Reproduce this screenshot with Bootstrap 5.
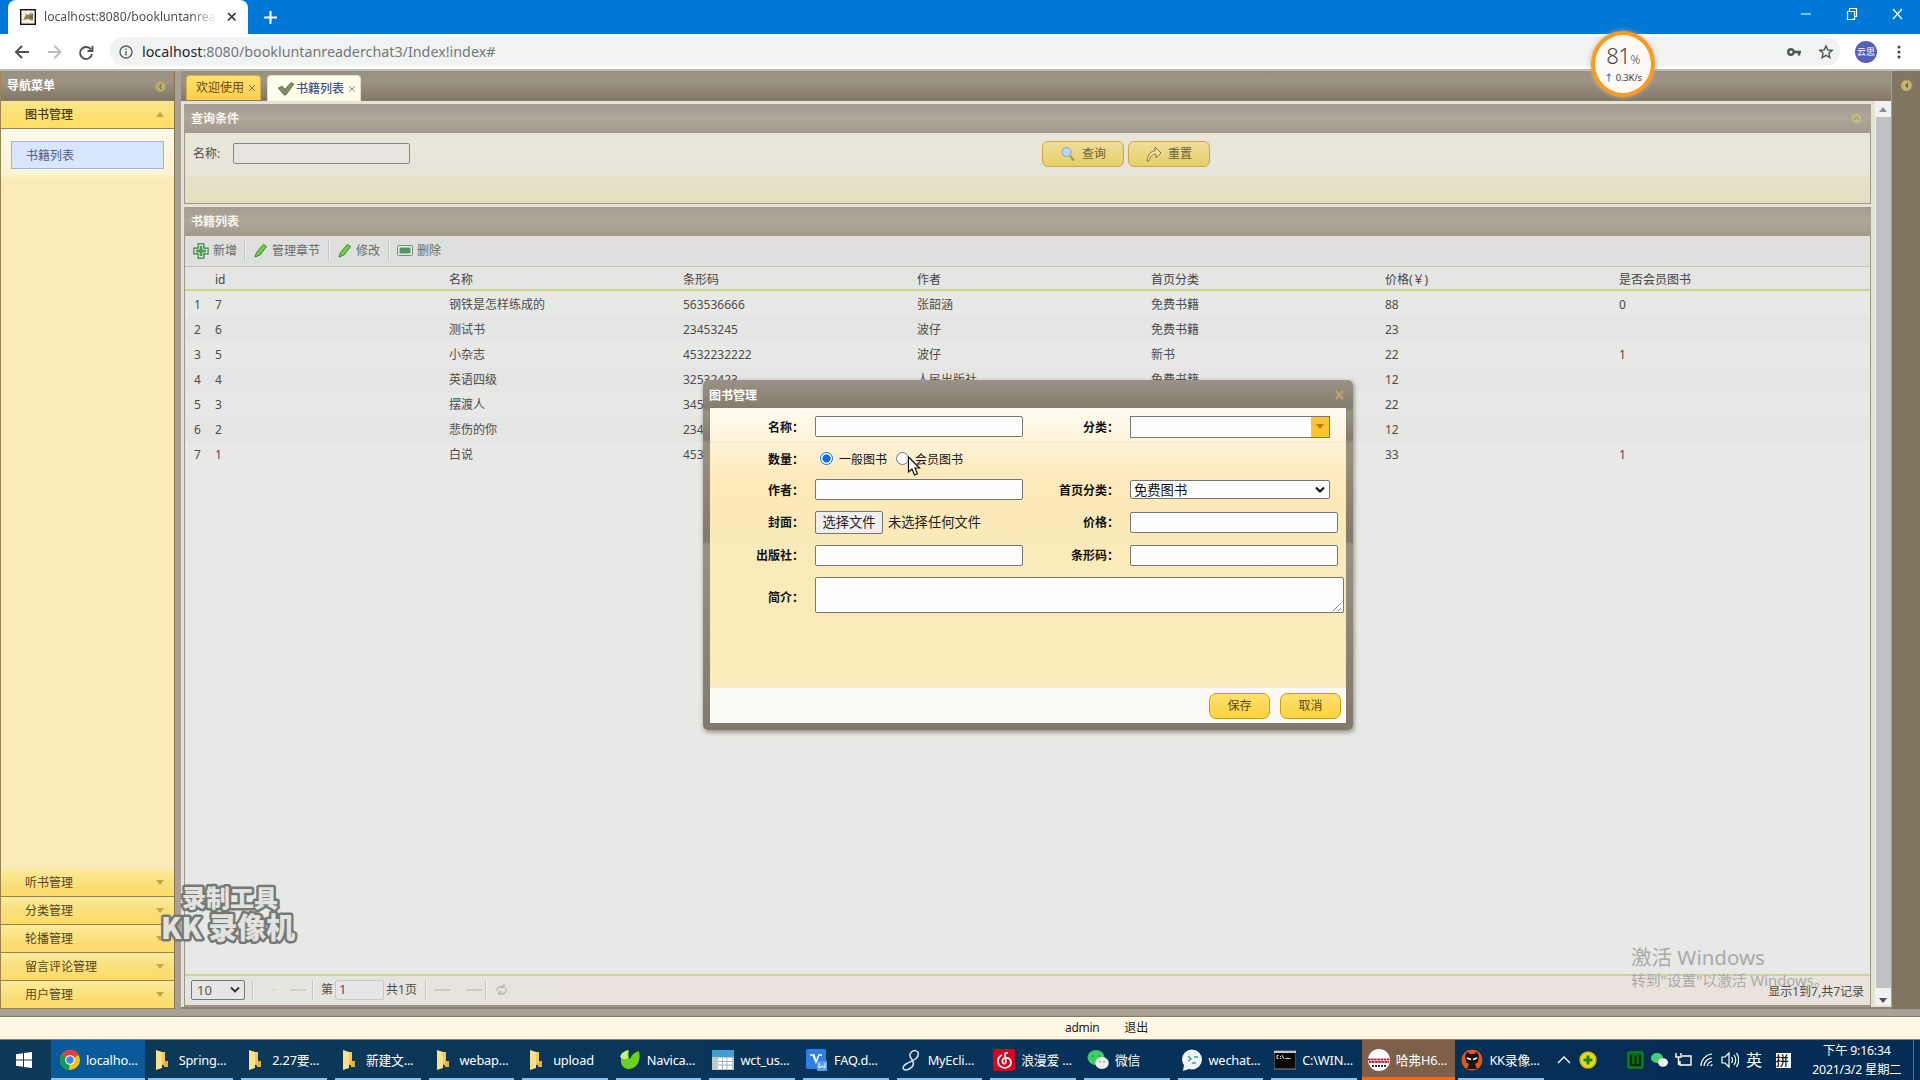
<!DOCTYPE html>
<html lang="zh-CN">
<head>
<meta charset="utf-8">
<title>书籍列表</title>
<link href="https://cdn.jsdelivr.net/npm/bootstrap@5.3.0/dist/css/bootstrap.min.css" rel="stylesheet">
<style>
*{box-sizing:border-box}
body{width:1920px;height:1080px;overflow:hidden;margin:0;font:12px/16px "Noto Sans","Noto Sans CJK SC",sans-serif;color:#4c4c4a;background:#fff;position:relative}
svg{display:block;flex:none}
.tabstrip{height:34px;background:#0078d7;padding-left:8px}
.btab{width:240px;height:34px;background:#fff;border-radius:8px 8px 0 0;padding:0 11px 0 12px;color:#4b4f54;font-size:12.2px}
.btab .ttl{width:173px;margin-left:8px;overflow:hidden;white-space:nowrap;-webkit-mask-image:linear-gradient(90deg,#000 85%,transparent)}
.addr{height:37px;border-bottom:2px solid #b9bbb6;background:#fff;padding-left:13px}
.omni{width:1730px;height:29px;background:#f1f3f2;border-radius:14px;padding-left:9px;font-size:14.3px;color:#73777b;margin-left:13px}
.omni b{font-weight:400;color:#25282b}
.avatar{width:22px;height:22px;border-radius:50%;background:#5560b8;color:#fff;font-size:9px;line-height:22px;text-align:center;margin-left:15px}
.workarea{height:938px;background:#a8a198}
.west{width:175px;border-right:1px solid #8c7449;border-left:1px solid #9c8454;background:#faebba}
.darkhead{height:30px;flex:none;background:linear-gradient(#99907f,#9c9484 35%,#827967 90%);color:#fff;font-weight:700;padding:0 7px 0 6px}
.acc{height:28px;flex:none;padding:0 10px 0 24px;border-bottom:1px solid #9a824e;background:linear-gradient(#fdeb9c,#fae07c 50%,#fbdc66);color:#54461f}
.acc.first{background:linear-gradient(#fbe58c,#fbe174 50%,#ffdf62);font-weight:500;color:#4a3a12}
.tri{width:0;height:0;border:4px solid transparent;border-bottom:0;border-top:5px solid #c9a63c}
.tri.up{border-top:0;border-bottom:5px solid #c9a63c}
.accbody{height:740px;flex:none;background:linear-gradient(#fffaea,#fdf3d2 45px,#fbebba 50px,#fbebba);padding:12px 10px}
.leaf{height:28px;border:1px solid #9db4e0;background:#d9e5fa;padding-left:14px;line-height:27px;color:#4f5f8c}
.centre{width:1710px;margin-left:6px;background:#e5e3d3;border-bottom:2px solid #8c8474}
.ctabs{height:30px;background:linear-gradient(#99907f,#9c9484 35%,#827967 95%);padding:4px 0 0 5px;gap:6px}
.ptab{height:25px;border:1px solid #dcb14a;border-bottom:0;border-radius:4px 4px 0 0;background:linear-gradient(#ffe070,#fbcf4a);color:#6b4a0c;padding:0 4px 0 9px}
.ptab.on{height:26px;background:#fffcec;border-color:#e9dfc0;color:#3d5a8c;font-weight:500}
.scrollarea{height:906px}
.stack{width:1687px;margin:3px 0 0 3px}
.phead{height:29px;background:linear-gradient(#a59d94,#aea698 50%,#a19a8e);color:#f7f5ee;font-weight:700;padding:0 8px 0 7px}
.pbox{border:1px solid #9b9687;border-top:0}
.qbody{height:71px;background:linear-gradient(#e9e6d9,#e9e4da 42px,#e4e1c6 44px,#e2dfc3);padding:10px 0 0 8px}
.qin{width:177px;height:21px;border:1px solid #858585;background:#e7e4e2;border-radius:2px}
.ybtn{height:26px;width:82px;border:1px solid #cfa24a;border-radius:6px;background:linear-gradient(#f0dd9a,#e5d066);color:#6b6240;gap:6px;display:flex;align-items:center;justify-content:center;padding:0}
.tool{height:30px;background:#dee0dd;border-top:3px solid #e5dfd6;padding:0 0 4px 8px;color:#666b66}
.tool span{margin-left:4px}
.tsep{width:2px;height:20px;border-left:1px solid #c4c6c3;border-right:1px solid #f2f3f1}
.grow{height:25px;padding-left:26px}
.grow.hd{height:25px;border-top:1px solid #bfc1bd;background:#e7e7e0;border-bottom:2px solid #cbd67e;color:#444;margin-bottom:1px;padding-top:3px}
.grow:nth-child(odd){background-color:#e5e6e3}
.gcell{width:234px;padding-left:4px;white-space:nowrap}
.gnum{width:26px;margin-left:-26px;padding-left:9px}
.grid{height:708px;background:#e8e9e6}
.pager{height:32px;border-top:2px solid #cdd889;background:linear-gradient(90deg,#e4e5df,#e9e3dc 25%);padding:0 6px 2px;border-bottom:1px solid #9b9687}
.psel{width:54px;height:20px;border:1px solid #777;border-radius:2px;background:#e5e7e6;color:#555;padding:0 4px 0 5px;font-size:13px}
.vscroll{width:16px;margin-left:4px;background:#f1f1f1;height:904px}
.thumb{height:871px;background:#c1c1c6;margin-left:1px}
.sbtn{height:16px}
.east{width:28px;background:#80765f;margin-left:1px;padding-top:8px}
.south{height:31px;background:#fff8e2;border-top:7px solid #a8a198;border-bottom:1px solid #8f8157;font-size:12px;color:#222;padding-left:1065px;gap:25px;box-shadow:inset 0 1px #857b69}
.south span:first-child{letter-spacing:-.3px}
.taskbar{height:40px;background:linear-gradient(90deg,#0d3a58,#06325a 60%,#052b52);color:#fff;font-size:12.8px;letter-spacing:-.2px;white-space:nowrap}
.tk{width:93.64px;height:40px;padding-left:6px;position:relative;flex:none}
.tk::after{content:"";position:absolute;left:3px;right:5px;bottom:0;height:2px;background:#8cc3ec}
.tk.cur{background:#0a5a9a;padding-left:8px}.tk.cur::after{left:0;right:0}
.tk.hot{background:#7e5f4a}.tk.hot::after{left:0;right:0;background:#ff6a00;height:3px}
.tk span{margin-left:6px}
.tk.cur span{margin-left:5px}
.dlg{position:absolute;left:703px;top:380px;width:650px;height:350px;background:linear-gradient(#999287,#857d6c 8%,#99917f 9%,#847b6b 17%,#99917f 18%,#82796b 46%,#989082 47%,#82796b);border-radius:5px;padding:0 7px 7px;box-shadow:1px 2px 5px rgba(60,60,50,.55)}
.dhead{height:28px;color:#fff;font-weight:700;margin:0 -3px 0 -1px;padding:3px 0 0 0}
.dbody{height:279px;background:linear-gradient(#fffbef,#fef3d8 36px,#fdebc0 60px,#fbe9b8 90px,#faebbd)}
.frow{color:#111}
.flab{width:94px;margin-right:11px;text-align:right;font:700 12px/16px "Noto Sans CJK SC",sans-serif;color:#111;white-space:nowrap}
.flab.two{width:96px}
.fin{width:208px;height:21px;border:1px solid #767676;border-radius:2px;background:#fdfefb;display:flex;align-items:center}
.dfoot{height:36px;background:#fafaf6;border-top:1px solid #f8e7d4;padding-right:5px;gap:10px}
.dfoot .ybtn{width:61px;border-color:#d09c14;background:linear-gradient(#ffe070,#fbd23f);color:#5b4a16;border-radius:7px}
.rad{width:13px;height:13px;border:1px solid #767676;border-radius:50%;background:#fff}
.rad.sel{border:1px solid #0b6fe8;background:radial-gradient(#0b6fe8 0 3.8px,#fff 4.4px)}
.over{position:absolute}
.gauge{left:1591px;top:31px;width:64px;height:66px;border:4px solid #fb9a1c;border-radius:50%;background:#fdfaf5;box-shadow:0 0 5px #b9b0a0;text-align:center;color:#444}
.watermark{left:1631px;top:944px;color:#a9aaa8;white-space:nowrap}
</style>
<script src="https://cdn.jsdelivr.net/npm/bootstrap@5.3.0/dist/js/bootstrap.bundle.min.js"></script>
</head>
<body>
<header>
 <div class="tabstrip d-flex align-items-center">
  <div class="btab d-flex align-items-center">
   <svg width="16" height="16"><rect x=".7" y=".7" width="14.6" height="14.6" fill="#f4f2e4" stroke="#111" stroke-width="1.4"/><path d="M3 11l3-5-2-2 4 2 4-3-2 5 3 4-5-2z" fill="#8c8343"/><path d="M9 8l4-4v7z" fill="#5b6b60"/></svg>
   <span class="ttl">localhost:8080/bookluntanrea</span>
   <svg class="ms-auto" width="10" height="10" stroke="#333" stroke-width="1.7"><path d="M1 1l7.500 7.500M8.500 1L1 8.500"/></svg>
  </div>
  <svg class="ms-3" width="13" height="13" stroke="#fff" stroke-width="2"><path d="M6.500 0v13M0 6.500h13"/></svg>
  <div class="ms-auto d-flex align-items-center me-3" style="margin-bottom:6px">
   <svg width="104" height="14" fill="none" stroke="#fff" stroke-width="1.2"><path d="M1 7h10M47.500 4.500h7v8h-7zM49.500 4.500v-3h7v8h-2M93 2l9 10M102 2l-9 10"/></svg>
  </div>
 </div>
 <div class="addr d-flex align-items-center">
  <svg width="84" height="18" fill="none" stroke-width="1.9"><path d="M16 9H3.500M9 3L3 9l6 6" stroke="#4d5054"/><path d="M35 9h12.500M41.500 3l6 6-6 6" stroke="#b9bbbd"/><path d="M78 6.500A6 6 0 1 0 79 11M79.500 3v5H74.500" stroke="#4d5054"/></svg>
  <div class="omni d-flex align-items-center">
   <svg width="14" height="14" fill="none" stroke="#5b5f63" stroke-width="1.4"><circle cx="7" cy="7" r="6"/><path d="M7 6v4.500M7 3.500V5"/></svg>
   <span style="margin-left:9px"><b>localhost</b>:8080/bookluntanreaderchat3/Index!index#</span>
   <svg class="ms-auto" width="60" height="18" fill="none" stroke="#505357" stroke-width="2.400"><circle cx="11" cy="9" r="2.800"/><path d="M14 9h7M19 9v3.500"/><path stroke-width="1.400" d="M46 3l1.800 4 4.400.4-3.300 2.900 1 4.300L46 12.300l-3.900 2.300 1-4.300-3.300-2.900 4.400-.4z"/></svg>
  </div>
  <div class="avatar">云思</div>
  <svg style="margin-left:20px" width="4" height="16" fill="#444"><circle cx="2" cy="3" r="1.500"/><circle cx="2" cy="8" r="1.500"/><circle cx="2" cy="13" r="1.500"/></svg>
 </div>
</header>

<main class="workarea d-flex">
 <aside class="west d-flex flex-column">
  <div class="darkhead d-flex align-items-center justify-content-between"><span>导航菜单</span><svg width="13" height="13"><circle cx="6.500" cy="6.500" r="5.500" fill="#b9ab72" stroke="#a4955c"/><path d="M8 3.500L5 6.500l3 3M6.500 4v5" stroke="#857647" fill="none"/></svg></div>
  <div class="acc first d-flex align-items-center justify-content-between">图书管理<i class="tri up"></i></div>
  <div class="accbody"><div class="leaf">书籍列表</div></div>
  <div class="acc d-flex align-items-center justify-content-between">听书管理<i class="tri"></i></div>
  <div class="acc d-flex align-items-center justify-content-between">分类管理<i class="tri"></i></div>
  <div class="acc d-flex align-items-center justify-content-between">轮播管理<i class="tri"></i></div>
  <div class="acc d-flex align-items-center justify-content-between">留言评论管理<i class="tri"></i></div>
  <div class="acc d-flex align-items-center justify-content-between">用户管理<i class="tri"></i></div>
 </aside>

 <section class="centre">
  <div class="ctabs d-flex">
   <div class="ptab d-flex align-items-center">欢迎使用<svg class="ms-1" width="8" height="8" stroke="#6d6f7e"><path d="M1 1l6 6M7 1L1 7"/></svg></div>
   <div class="ptab on d-flex align-items-center"><svg width="18" height="14" style="margin-right:1px"><path d="M1 6l4-2 3 3 6-6.500 3 1.500-8 11H7z" fill="#7d9063" stroke="#5c6c50" stroke-width=".7"/></svg>书籍列表<svg class="ms-1" width="8" height="8" stroke="#888"><path d="M1 1l6 6M7 1L1 7"/></svg></div>
  </div>
  <div class="scrollarea d-flex">
   <div class="stack">
    <div class="phead d-flex align-items-center justify-content-between"><span>查询条件</span><svg width="13" height="13"><circle cx="6.500" cy="6.500" r="5.500" fill="#bfb792" stroke="#b0a67c"/><path d="M4 8l2.500-3L9 8" stroke="#9b9064" fill="none"/></svg></div>
    <div class="pbox qbody d-flex align-items-start">
     <span style="width:40px;margin-top:3px">名称:</span><div class="qin"></div>
     <div class="d-flex" style="margin-left:632px;gap:4px;margin-top:-2px">
      <button class="ybtn"><svg width="16" height="16"><circle cx="6.500" cy="6" r="4.500" fill="#bcd7f5" stroke="#7e9fd0"/><path d="M10 10l4 4.500" stroke="#b98c50" stroke-width="2"/></svg>查询</button>
      <button class="ybtn"><svg width="16" height="18"><path d="M1 16C2 9 5 6 9 6V2l6 6-5 5V9C6 9 4 12 3 16z" fill="#f0e2a8" stroke="#8c7440"/></svg>重置</button>
     </div>
    </div>
    <div style="height:3px"></div>
    <div class="phead d-flex align-items-center">书籍列表</div>
    <div class="pbox">
     <div class="tool d-flex align-items-center">
      <svg width="16" height="16" viewBox="0 0 17 17"><path d="M5.500 1h6v4.500H16v6h-4.500V16h-6v-4.500H1v-6h4.500z" fill="#fff" stroke="#3f7548" stroke-width="1.300"/><path d="M7 3h3v4h4v3h-4v4H7v-4H3V7h4z" fill="#3fa647"/></svg><span>新增</span>
      <i class="tsep" style="margin:0 8px 0 7px"></i>
      <svg width="14" height="15"><path d="M1 14l1.500-4.500L9.500 1.500l3 2L6 12z" fill="#6ed04a" stroke="#3a8137"/></svg><span>管理章节</span>
      <i class="tsep" style="margin:0 8px"></i>
      <svg width="14" height="15"><path d="M1 14l1.500-4.500L9.500 1.500l3 2L6 12z" fill="#6ed04a" stroke="#3a8137"/></svg><span>修改</span>
      <i class="tsep" style="margin:0 7px 0 8px"></i>
      <svg width="16" height="11"><rect x=".6" y=".6" width="14.800" height="9.800" rx="1" fill="#f2f6f0" stroke="#708072"/><rect x="2.500" y="2.500" width="11" height="6" fill="#4b9a60"/></svg><span>删除</span>
     </div>
     <div class="grid" id="bookGrid"></div>
     <div class="pager d-flex align-items-center">
      <div class="psel d-flex align-items-center justify-content-between">10<svg width="10" height="8" fill="none" stroke="#333" stroke-width="1.800"><path d="M1 1.500l4 4 4-4"/></svg></div>
      <i class="tsep" style="margin:0 10px 0 7px"></i><svg width="48" height="8" stroke="#d2d3bc"><path d="M9 4h2M26 4h16" stroke-width="2"/></svg>
      <i class="tsep" style="margin-right:7px"></i>第<div class="psel" style="width:49px;border-color:#c9c9c4;margin:0 2px;padding-left:3px;line-height:17px">1</div>共1页
      <i class="tsep" style="margin:0 5px 0 8px"></i><svg width="53" height="8" stroke="#cfcbbd" stroke-width="2"><path d="M2 4h16M34 4h16"/></svg><i class="tsep" style="margin-right:8px"></i>
      <svg width="13" height="13" fill="none" stroke="#c0b9ab" stroke-width="1.400"><path d="M2 8a4.500 4.500 0 0 1 7-4M11 5a4.500 4.500 0 0 1-7 5M9 1v3.500H5.500M4 12V9h3"/></svg>
      <span class="ms-auto" style="padding-top:5px">显示1到7,共7记录</span>
     </div>
    </div>
   </div>
   <div class="vscroll"><div class="sbtn d-flex align-items-center justify-content-center"><i class="tri up" style="border-bottom-color:#8f8f8f"></i></div><div class="thumb"></div><div class="sbtn d-flex align-items-center justify-content-center pt-2"><i class="tri" style="border-top-color:#505050"></i></div></div>
  </div>
 </section>
 <aside class="east"><svg class="mx-auto" width="13" height="13"><circle cx="6.500" cy="6.500" r="5.500" fill="#c4b577" stroke="#a4955c"/><path d="M8 3.500L5 6.500l3 3" fill="#6d6138"/></svg></aside>
</main>
<div class="south d-flex align-items-center"><span>admin</span><span>退出</span></div>

<footer class="taskbar d-flex align-items-center">
 <div style="width:51px;padding-left:16px"><svg width="16" height="16" fill="#fff"><path d="M0 2.300l7-1v6.200H0zM8 1.100L16 0v7.500H8zM0 8.500h7v6.200l-7-1zM8 8.500h8V16l-8-1.100z"/></svg></div>
 <div class="d-flex" id="tasks"></div>
 <svg style="margin-left:6px" width="184" height="26" fill="none" stroke="#fff" stroke-width="1.400">
  <path d="M3 16l6-6 6 6"/>
  <circle cx="33" cy="13" r="8" fill="#f3d813" stroke="#c9b80d"/><path d="M33 8.500v9M28.500 13h9" stroke="#128c2c" stroke-width="3"/>
  <rect x="73" y="5" width="15" height="16" rx="2" fill="#0b6b12" stroke="#0a8c17"/><path d="M76 8v10h9V8M80.500 9v8" stroke="#042f0a" stroke-width="2"/>
  <ellipse cx="102" cy="11" rx="6" ry="5" fill="#48cf71" stroke="none"/><ellipse cx="108" cy="15.500" rx="5" ry="4.200" fill="#eef5ef" stroke="none"/>
  <path d="M127 9h9v9h-11v-4M121 6v4h5V6M123.500 10v8"/>
  <path d="M146 19a12 12 0 0 1 11-12M149 19a8.500 8.500 0 0 1 8-8M152.500 19a5 5 0 0 1 4.500-4.500M155.500 19l2-1.500" stroke-width="1.200"/>
  <path d="M167 10h3l4-4v14l-4-4h-3zM176.500 10q2 3 0 6M179 8q3.500 5 0 10M181.500 6q4.500 7 0 14" stroke-width="1.200"/>
 </svg>
 <span style="font-size:16px;margin-left:7px">英</span>
 <span style="margin-left:14px;background:#fff;color:#111;width:15px;height:15px;line-height:15px;font-size:13px;font-weight:500">拼</span>
 <div class="text-center" style="width:100px;margin-left:16px;line-height:19px;font-size:12.3px">下午 9:16:34<br>2021/3/2 星期二</div>
 <i style="width:1px;height:40px;background:#557796;margin-left:6px"></i>
</footer>

<div class="over watermark"><div style="font-size:20.500px;line-height:26px">激活 Windows</div><div style="font-size:14.800px;line-height:20px">转到"设置"以激活 Windows。</div></div>

<svg class="over" style="left:155px;top:880px" width="150" height="70" font-family="Noto Sans CJK SC,sans-serif" font-weight="900" fill="#e2e3df" stroke="#747977" stroke-width="5" stroke-linejoin="round" paint-order="stroke">
 <text x="27" y="27" font-size="24">录制工具</text>
 <text x="6" y="59" font-size="29" textLength="134" lengthAdjust="spacingAndGlyphs">KK 录像机</text>
</svg>

<section class="dlg">
 <div class="dhead d-flex align-items-center justify-content-between"><span>图书管理</span><svg width="15" height="14" stroke="#b4a767" stroke-width="2.600"><path d="M2 2l7 8M9 2l-7 8"/></svg></div>
 <div class="dbody">
  <div class="frow d-flex align-items-center" style="height:35px;padding-top:3px;border-bottom:1px dotted #eadfc2"><div class="flab">名称：</div><div class="fin"></div><div class="flab two">分类：</div><div class="fin justify-content-end" style="width:200px;height:22px;border-radius:0"><div class="d-flex align-items-center justify-content-center h-100" style="width:18px;background:#fcc62e"><i class="tri" style="border-top-color:#b07c0c"></i></div></div></div>
  <div class="frow d-flex align-items-center" style="height:31px"><div class="flab">数量：</div><i class="rad sel" style="margin:0 6px 0 5px"></i><span style="padding-top:3px">一般图书</span><i class="rad" style="margin:0 6px 0 9px"></i><span style="padding-top:3px">会员图书</span></div>
  <div class="frow d-flex align-items-center" style="height:31px"><div class="flab">作者：</div><div class="fin"></div><div class="flab two">首页分类：</div><div class="fin justify-content-between" style="width:200px;height:19px;font-size:13.300px;padding:0 4px 0 3px">免费图书<svg width="10" height="8" fill="none" stroke="#111" stroke-width="2"><path d="M1 1.500l4 4 4-4"/></svg></div></div>
  <div class="frow d-flex align-items-center" style="height:34px"><div class="flab">封面：</div><div class="d-flex align-items-center" style="width:208px;font-size:13.300px;color:#222"><span class="fin justify-content-center" style="width:68px;height:23px;background:#efefef;margin-right:5px">选择文件</span>未选择任何文件</div><div class="flab two">价格：</div><div class="fin"></div></div>
  <div class="frow d-flex align-items-center" style="height:32px"><div class="flab">出版社：</div><div class="fin"></div><div class="flab two">条形码：</div><div class="fin"></div></div>
  <div class="frow d-flex align-items-center" style="height:48px"><div class="flab" style="padding-top:3px">简介：</div><div class="fin align-items-end justify-content-end" style="width:529px;height:36px"><svg width="11" height="11" stroke="#777" stroke-width=".9"><path d="M1 10l8-8M6 10l3-3"/></svg></div></div>
 </div>
 <div class="dfoot d-flex align-items-center justify-content-end"><button class="ybtn">保存</button><button class="ybtn">取消</button></div>
</section>
<svg class="over" style="left:907px;top:456px" width="15" height="21"><path d="M1.500 1v15l3.500-3 2.500 6 3-1.300L8 12h4.500z" fill="#fff" stroke="#111" stroke-width="1.200"/></svg>

<div class="over gauge"><div style="font-size:22px;line-height:24px;margin-top:8px;letter-spacing:-.5px;font-weight:300">81<small style="font-size:12px">%</small></div><div style="font-size:9.500px;line-height:12px;margin-top:0;letter-spacing:-.2px"><b style="color:#1587d8">↑</b> 0.3K/s</div></div>

<script>
const books=[
 ['id','名称','条形码','作者','首页分类','价格(￥)','是否会员图书'],
 ['7','钢铁是怎样练成的','563536666','张韶涵','免费书籍','88','0'],
 ['6','测试书','23453245','波仔','免费书籍','23',''],
 ['5','小杂志','4532232222','波仔','新书','22','1'],
 ['4','英语四级','32532423','人民出版社','免费书籍','12',''],
 ['3','摆渡人','345','','','22',''],
 ['2','悲伤的你','234','','','12',''],
 ['1','白说','453','','','33','1']];
document.getElementById('bookGrid').innerHTML=books.map((r,i)=>
 `<div class="grow d-flex align-items-center${i?'':' hd'}"><span class="gnum">${i||''}</span>${r.map(c=>`<span class="gcell">${c}</span>`).join('')}</div>`).join('');

const folder='<path d="M5 3h9v14l-4-2v4l-5-2z" fill="#f3c95a"/><path d="M5 1l6 2v16l-6 2z" fill="#ffe08a"/><path d="M13 12h4v6h-4z" fill="#e6b23e"/>';
const tasks=[
 ['localho...','<circle cx="11" cy="11" r="10" fill="#f1c40f"/><path d="M11 11L2.300 6A10 10 0 0 1 20 6z" fill="#db4437"/><path d="M11 11L2.300 6A10 10 0 0 0 10 21z" fill="#0f9d58"/><circle cx="11" cy="11" r="4.800" fill="#fff"/><circle cx="11" cy="11" r="3.700" fill="#4285f4"/>','cur'],
 ['Spring...',folder],['2.27要...',folder],['新建文...',folder],['webap...',folder],['upload',folder],
 ['Navica...','<path d="M2 12q-1-9 8-11-1 7 1 9 2-6 9-8 2 10-3 15-4 4-9 3-6-2-6-8z" fill="#6cd020"/><path d="M1 8q1-5 8-7-1 6 0 8-4 3-8-1z" fill="#c9f07a"/>'],
 ['wct_us...','<rect x="0" y="1" width="22" height="20" fill="#c2c6c8"/><rect width="22" height="7" y="1" fill="#3fa0cf"/><path d="M6 9h14v11H6z" fill="#fff"/><path d="M6 12.500h14M6 16h14M10.500 9v11M15 9v11" stroke="#9bb"/>'],
 ['FAQ.d...','<rect width="20" height="20" rx="2" fill="#2f80e4"/><path d="M4 6h4l2 7 3-7h3M7 6l3 7" stroke="#fff" fill="none" stroke-width="1.500"/><rect x="11" y="12" width="10" height="10" fill="#5b9bf0"/><path d="M13 14v5l3-2 3 2v-5" stroke="#fff" fill="none"/>'],
 ['MyEcli...','<path d="M18 3C13-1 8 5 11 9s4 8-2 11-8-2-3-5 14-5 12-12" fill="none" stroke="#dce6ee" stroke-width="1.500"/>'],
 ['浪漫爱 ...','<rect width="22" height="22" rx="2" fill="#d9001b"/><path d="M15 4q-4-1-3 3l1 6q-1 3-3 1-2-4 2-5 5-1 6 4 0 5-6 6-7-1-7-7 0-4 4-6" fill="none" stroke="#fff" stroke-width="1.700"/>'],
 ['微信','<ellipse cx="9" cy="8.500" rx="8.500" ry="7.500" fill="#3ccf63"/><ellipse cx="15" cy="14" rx="6.800" ry="6" fill="#eef2ef"/><path d="M6 6v2M12 6v2M13 12v1.500M17 12v1.500" stroke="#284"/>'],
 ['wechat...','<circle cx="11" cy="10.500" r="10" fill="#eef3f3"/><path d="M3 16l-1 6 6-2z" fill="#eef3f3"/><path d="M7 7l3 3-3 2M13 8h4M11 14h4" stroke="#3aa58d" fill="none" stroke-width="1.500"/>'],
 ['C:\\WIN...','<rect y="2" width="22" height="18" fill="#0a0a0a" stroke="#888"/><path d="M0 2h22v2H0z" fill="#c8c8c8"/><path d="M4.500 6.500h-1.500v3h1.500M6.500 7v1M6.500 9v1M8 6l2 4M11.500 9.500h5" stroke="#ddd" fill="none"/>'],
 ['哈弗H6...','<circle cx="11" cy="11" r="11" fill="#fff"/><path d="M0 10.500h22M1 13h20" stroke="#b3203a" stroke-width="1.800" stroke-dasharray="2.500 .6"/><path d="M4 17h14" stroke="#333" stroke-width="2" stroke-dasharray="2 1"/>','hot'],
 ['KK录像...','<circle cx="11" cy="11" r="10.500" fill="#e4580f"/><path d="M4 7l2-4 3 2h4l3-2 2 4-1 6-3 2 2 5H6l2-5-3-2z" fill="#141414"/><path d="M6 9l4 1.500M16 9l-4 1.500" stroke="#fff" stroke-width="1.500"/>']];
document.getElementById('tasks').innerHTML=tasks.map(([t,s,k])=>
 `<div class="tk d-flex align-items-center ${k||''}"><svg width="22" height="22">${s}</svg><span>${t}</span></div>`).join('');
</script>
</body>
</html>
